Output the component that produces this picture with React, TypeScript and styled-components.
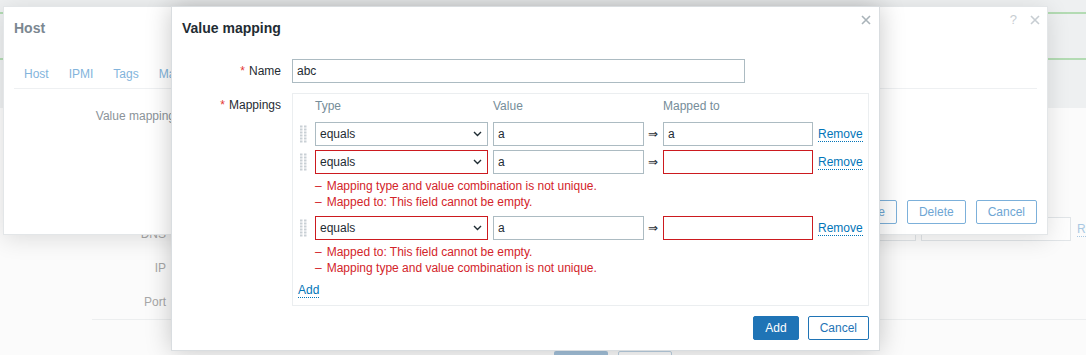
import React from "react";
import styled, { createGlobalStyle, css } from "styled-components";

const GlobalStyle = createGlobalStyle`
  *, *::before, *::after { box-sizing: border-box; }
  html, body { margin: 0; padding: 0; }
  body {
    font-family: "Liberation Sans", Arial, sans-serif;
    font-size: 12px;
    line-height: 16px;
    color: #1f2c33;
    background: #fbfbfb;
    overflow: hidden;
  }
`;

const Page = styled.div`
  position: relative;
  width: 1086px;
  height: 355px;
  overflow: hidden;
  background: #fbfbfb;
`;

/* ---------- page behind the dialogs (dimmed) ---------- */
const TopBand = styled.div`
  height: 108px;
  padding-top: 12px;
  background: #eef0f1;
`;
const BandLines = styled.div`
  height: 48px;
  border-top: 2px solid #b3dbb3;
  border-bottom: 2px solid #b3dbb3;
`;
const BgForm = styled.div`
  margin: 109px 0 0 92px;
  border-bottom: 1px solid #eceeef;
`;
const BgRow = styled.div`
  display: flex;
  align-items: center;
  height: 34px;
`;
const BgLabel = styled.div`
  flex: none;
  width: 74px;
  text-align: right;
  color: #a8a8a8;
`;
const BgFields = styled.div`
  flex: none;
  display: flex;
  align-items: center;
  gap: 5px;
  margin-left: 659px;
  align-self: flex-start;
`;
const BgInput = styled.div<{ $width: number }>`
  flex: none;
  width: ${(p) => p.$width}px;
  height: 24px;
  border: 1px solid #e1e5e8;
  background: #fdfdfd;
`;
const BgLink = styled.span`
  flex: none;
  margin-left: 1px;
  color: #a9c8e2;
  border-bottom: 1px dotted #a9c8e2;
  line-height: 14px;
  white-space: nowrap;
`;
const BgFooter = styled.div`
  display: flex;
  gap: 10px;
  margin-top: 31px;
  padding-left: 554px;
`;
const BgButton = styled.div<{ $filled?: boolean }>`
  width: 54px;
  height: 24px;
  border-radius: 2px;
  ${(p) =>
    p.$filled
      ? css`background: #a3c1da;`
      : css`border: 1px solid #bcd2e3; background: #fdfdfd;`}
`;

/* ---------- dialog shell ---------- */
const Dialog = styled.section<{ $left: number; $top: number; $width: number; $height: number; $front?: boolean }>`
  position: absolute;
  left: ${(p) => p.$left}px;
  top: ${(p) => p.$top}px;
  width: ${(p) => p.$width}px;
  height: ${(p) => p.$height}px;
  display: flex;
  flex-direction: column;
  background: #fff;
  border: 1px solid ${(p) => (p.$front ? "#d9dde0" : "#e3e6e8")};
  box-shadow: ${(p) => (p.$front ? "0 0 24px rgba(0, 0, 0, 0.22)" : "0 4px 22px rgba(0, 0, 0, 0.12)")};
`;
const DialogHeader = styled.header<{ $padRight: number }>`
  display: flex;
  align-items: flex-start;
  height: 42px;
  padding: 0 ${(p) => p.$padRight}px 0 10px;
`;
const DialogTitle = styled.h4<{ $muted?: boolean }>`
  margin: 13px 0 0;
  font-size: 14px;
  line-height: 16px;
  font-weight: bold;
  color: ${(p) => (p.$muted ? "#7b8791" : "#1f2c33")};
`;
const HeaderTools = styled.div`
  display: flex;
  align-items: center;
  gap: 13px;
  margin: 5px 0 0 auto;
  height: 16px;
`;
const HelpMark = styled.span`
  font-size: 13px;
  color: #c7cdd2;
`;
const CloseSvg = styled.svg`
  display: block;
`;
const CloseIcon = ({ color }: { color: string }) => (
  <CloseSvg width="10" height="10" viewBox="0 0 10 10">
    <path d="M1 1 L9 9 M9 1 L1 9" stroke={color} strokeWidth="1.6" fill="none" />
  </CloseSvg>
);
const DialogFooter = styled.footer<{ $gap: number }>`
  display: flex;
  justify-content: flex-end;
  gap: ${(p) => p.$gap}px;
  margin-top: auto;
  padding: 0 10px 10px;
`;
const Button = styled.button<{ $primary?: boolean; $muted?: boolean }>`
  flex: none;
  height: 24px;
  padding: 0 11px;
  border-radius: 2px;
  font-family: inherit;
  font-size: 12px;
  white-space: nowrap;
  cursor: pointer;
  ${(p) =>
    p.$primary
      ? css`
          background: #1f74b6;
          border: 1px solid #1f74b6;
          color: #fff;
        `
      : p.$muted
      ? css`
          background: #fff;
          border: 1px solid #7cb0da;
          color: #6ea6d4;
        `
      : css`
          background: #fff;
          border: 1px solid #1f74b6;
          color: #1f74b6;
        `}
`;

/* ---------- host dialog ---------- */
const TabList = styled.nav`
  display: flex;
  margin: 0 10px;
  border-bottom: 1px solid #eef0f2;
`;
const Tab = styled.span`
  padding: 17px 10px 6px;
  color: #82b4dc;
  white-space: nowrap;
`;
const HostRow = styled.div`
  display: flex;
  margin: 19px 10px 0;
`;
const HostLabel = styled.div`
  width: 161px;
  text-align: right;
  color: #8b9399;
  white-space: nowrap;
`;

/* ---------- value mapping dialog ---------- */
const FormGrid = styled.div`
  display: grid;
  grid-template-columns: 99px 1fr;
  column-gap: 11px;
  row-gap: 10px;
  padding: 10px 10px 0;
`;
const FieldLabel = styled.label`
  text-align: right;
  line-height: 24px;
  white-space: nowrap;
  color: #1f2c33;
`;
const Required = styled.span`
  color: #e33734;
  margin-right: 4px;
`;
const TextInput = styled.input<{ $width?: number; $error?: boolean }>`
  display: block;
  width: ${(p) => (p.$width ? `${p.$width}px` : "100%")};
  height: 24px;
  margin: 0;
  padding: 0 4px;
  border: 1px solid ${(p) => (p.$error ? "#cc1a1f" : "#acbbc2")};
  border-radius: 0;
  background: #fff;
  font-family: inherit;
  font-size: 12px;
  color: #1f2c33;
  outline: none;
`;
const MappingTable = styled.div`
  display: flex;
  flex-direction: column;
  gap: 4px;
  padding: 4px 0 7px;
  border: 1px solid #ebeef0;
`;
const gridCols = css`
  display: grid;
  grid-template-columns: 17px 173px 151px 9px 150px auto;
  column-gap: 5px;
`;
const HeadRow = styled.div`
  ${gridCols};
  height: 20px;
  align-items: start;
  color: #768d99;
`;
const MapRow = styled.div`
  ${gridCols};
  align-items: center;
  height: 24px;
`;
const HandleSvg = styled.svg`
  display: block;
  margin-left: 7px;
`;
const DragHandle = () => (
  <HandleSvg width="7" height="18" viewBox="0 0 7 18">
    {[0, 1, 2, 3, 4, 5].map((r) =>
      [0, 4].map((c) => <rect key={`${r}-${c}`} x={c} y={r * 3 + 0.5} width="2.5" height="2" fill="#c9d0d5" />)
    )}
  </HandleSvg>
);
const SelectBox = styled.div<{ $error?: boolean }>`
  display: flex;
  align-items: center;
  justify-content: space-between;
  height: 24px;
  padding: 0 5px 0 4px;
  border: 1px solid ${(p) => (p.$error ? "#cc1a1f" : "#acbbc2")};
  background: #fff;
  color: #1f2c33;
`;
const Chevron = () => (
  <svg width="9" height="6" viewBox="0 0 9 6">
    <polyline points="1,1 4.5,4.5 8,1" fill="none" stroke="#1f2c33" strokeWidth="1.4" />
  </svg>
);
const Arrow = styled.span`
  margin-left: -1px;
  font-size: 12px;
  color: #1f2c33;
`;
const LinkText = styled.span`
  justify-self: start;
  color: #0275b8;
  line-height: 14px;
  border-bottom: 1px dotted #0275b8;
  cursor: pointer;
`;
const ErrorBlock = styled.ul`
  margin: 0;
  padding: 0 0 2px 22px;
  list-style: none;
  color: #d3242a;
`;
const ErrorLine = styled.li`
  line-height: 16px;
  &::before {
    content: "–";
    margin-right: 5px;
  }
`;
const AddRow = styled.div`
  padding-left: 5px;
  line-height: 16px;
`;

type Mapping = { value: string; mapped: string; typeError: boolean; mappedError: boolean; errors: string[] };

const mappings: Mapping[] = [
  { value: "a", mapped: "a", typeError: false, mappedError: false, errors: [] },
  {
    value: "a",
    mapped: "",
    typeError: true,
    mappedError: true,
    errors: ["Mapping type and value combination is not unique.", "Mapped to: This field cannot be empty."],
  },
  {
    value: "a",
    mapped: "",
    typeError: true,
    mappedError: true,
    errors: ["Mapped to: This field cannot be empty.", "Mapping type and value combination is not unique."],
  },
];

export default function App() {
  return (
    <Page>
      <GlobalStyle />

      <TopBand>
        <BandLines />
      </TopBand>
      <BgForm>
        <BgRow>
          <BgLabel>DNS</BgLabel>
          <BgFields>
            <BgInput $width={91} />
            <BgInput $width={150} />
            <BgLink>Remove</BgLink>
          </BgFields>
        </BgRow>
        <BgRow>
          <BgLabel>IP</BgLabel>
        </BgRow>
        <BgRow>
          <BgLabel>Port</BgLabel>
        </BgRow>
      </BgForm>
      <BgFooter>
        <BgButton $filled />
        <BgButton />
      </BgFooter>

      <Dialog $left={3} $top={6} $width={1045} $height={229}>
        <DialogHeader $padRight={7}>
          <DialogTitle $muted>Host</DialogTitle>
          <HeaderTools>
            <HelpMark>?</HelpMark>
            <CloseIcon color="#c7cdd2" />
          </HeaderTools>
        </DialogHeader>
        <TabList>
          {["Host", "IPMI", "Tags", "Macros", "Inventory", "Encryption", "Value mapping"].map((t) => (
            <Tab key={t}>{t}</Tab>
          ))}
        </TabList>
        <HostRow>
          <HostLabel>Value mapping</HostLabel>
        </HostRow>
        <DialogFooter $gap={10}>
          {["Update", "Clone", "Full clone", "Delete", "Cancel"].map((b) => (
            <Button key={b} $muted>
              {b}
            </Button>
          ))}
        </DialogFooter>
      </Dialog>

      <Dialog $left={171} $top={6} $width={709} $height={345} $front>
        <DialogHeader $padRight={8}>
          <DialogTitle>Value mapping</DialogTitle>
          <HeaderTools>
            <CloseIcon color="#a9b3b9" />
          </HeaderTools>
        </DialogHeader>
        <FormGrid>
          <FieldLabel>
            <Required>*</Required>Name
          </FieldLabel>
          <TextInput $width={453} value="abc" readOnly />

          <FieldLabel>
            <Required>*</Required>Mappings
          </FieldLabel>
          <MappingTable>
            <HeadRow>
              <span />
              <span>Type</span>
              <span>Value</span>
              <span />
              <span>Mapped to</span>
              <span />
            </HeadRow>
            {mappings.map((m, i) => (
              <React.Fragment key={i}>
                <MapRow>
                  <DragHandle />
                  <SelectBox $error={m.typeError}>
                    <span>equals</span>
                    <Chevron />
                  </SelectBox>
                  <TextInput value={m.value} readOnly />
                  <Arrow>⇒</Arrow>
                  <TextInput value={m.mapped} $error={m.mappedError} readOnly />
                  <LinkText>Remove</LinkText>
                </MapRow>
                {m.errors.length > 0 && (
                  <ErrorBlock>
                    {m.errors.map((e) => (
                      <ErrorLine key={e}>{e}</ErrorLine>
                    ))}
                  </ErrorBlock>
                )}
              </React.Fragment>
            ))}
            <AddRow>
              <LinkText>Add</LinkText>
            </AddRow>
          </MappingTable>
        </FormGrid>
        <DialogFooter $gap={9}>
          <Button $primary>Add</Button>
          <Button>Cancel</Button>
        </DialogFooter>
      </Dialog>
    </Page>
  );
}
